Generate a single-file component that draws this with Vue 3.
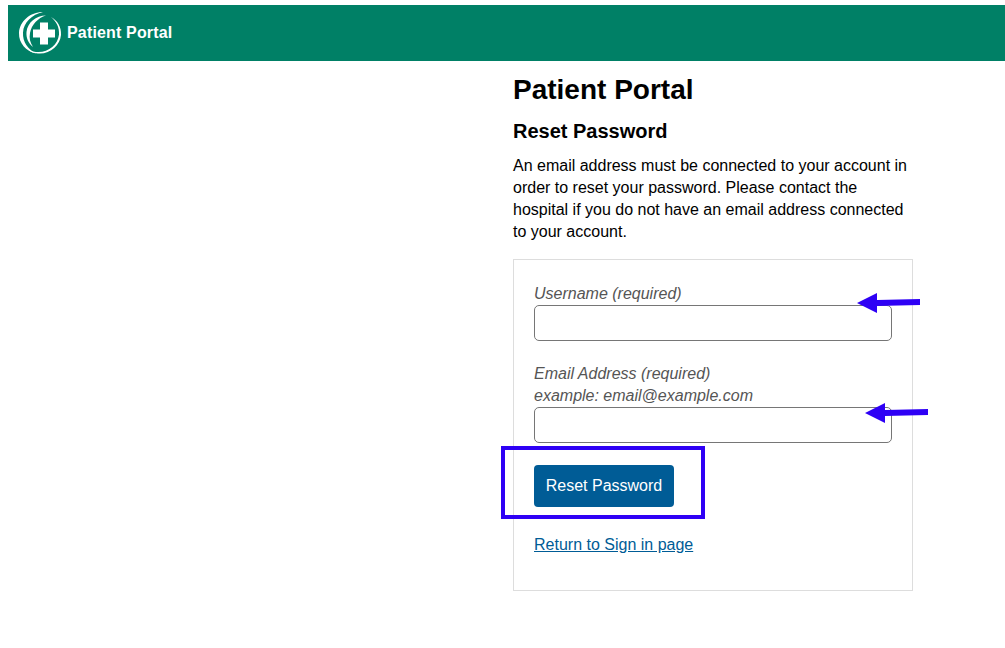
<script setup>
const paragraph = 'An email address must be connected to your account in order to reset your password. Please contact the hospital if you do not have an email address connected to your account.'
</script>

<template>
  <div class="page">
    <header class="bar">
      <svg class="logo" viewBox="0 0 44 44" width="44" height="44" aria-hidden="true">
        <path d="M25 1C12 1 1.500 10.500 1 22C0.700 32 8 40.500 18 42.500C10 38 4.500 31 5 21.500C5.500 11.500 14 3.500 25 1Z" fill="#fff" />
        <path d="M28 4.500C18 4.500 9.500 11.500 8.500 21C8 27 10.500 32.500 15 36C12 31.500 11 27 12 22C13.500 13.500 20 7 28 4.500Z" fill="#fff" />
        <path d="M33 6C39.500 9.500 43.500 16 43 24C42 34.500 32 43.500 20 42.500C15 42 12 40.500 10 38.500C13.500 40.500 17 41 20.500 41C31 41 40 33.500 41 23.500C41.500 16.500 38.500 10.500 33 6Z" fill="#fff" />
        <path d="M22 11.500H30V18.500H37V26.500H30V33.500H22V26.500H15V18.500H22Z" fill="#fff" />
      </svg>
      <span class="brand">Patient Portal</span>
    </header>

    <main class="main">
      <h1>Patient Portal</h1>
      <h2>Reset Password</h2>
      <p class="intro">{{ paragraph }}</p>

      <form class="card" @submit.prevent>
        <label class="field first">
          <span class="label">Username (required)</span>
          <span class="input-wrap">
            <input type="text" />
            <svg class="arrow a1" viewBox="0 0 64 22" width="64" height="22" aria-hidden="true">
              <path d="M0 11L20 1V8L63 7V13L20 14V21Z" fill="#2e00f5" />
            </svg>
          </span>
        </label>

        <label class="field second">
          <span class="label">Email Address (required)</span>
          <span class="label">example: email@example.com</span>
          <span class="input-wrap">
            <input type="email" />
            <svg class="arrow a2" viewBox="0 0 64 22" width="64" height="22" aria-hidden="true">
              <path d="M0 11L20 1V8L63 7V13L20 14V21Z" fill="#2e00f5" />
            </svg>
          </span>
        </label>

        <div class="btn-wrap">
          <button type="submit">Reset Password</button>
          <span class="highlight"></span>
        </div>

        <a class="back" href="#">Return to Sign in page</a>
      </form>
    </main>
  </div>
</template>

<style scoped>
.page {
  width: 1005px;
  height: 648px;
  padding-top: 5px;
  box-sizing: border-box;
  background: #fff;
  font-family: "Liberation Sans", Arial, sans-serif;
  color: #000;
  overflow: hidden;
}
.bar {
  height: 56px;
  margin-left: 8px;
  background: #008066;
  display: flex;
  align-items: center;
  padding-left: 10px;
  gap: 5px;
}
.logo { flex: none; }
.brand {
  color: #fff;
  font-size: 16px;
  font-weight: 700;
  letter-spacing: 0.16px;
}
.main {
  margin-left: 513px;
  width: 400px;
}
h1 {
  margin: 12px 0 0;
  font-size: 28px;
  line-height: 34px;
  font-weight: 700;
}
h2 {
  margin: 11px 0 0;
  font-size: 20px;
  line-height: 26px;
  font-weight: 700;
}
.intro {
  margin: 11px 0 0;
  font-size: 16px;
  line-height: 22px;
}
.card {
  margin-top: 16px;
  height: 332px;
  box-sizing: border-box;
  border: 1px solid #ddd;
  padding: 23px 20px 0;
  display: flex;
  flex-direction: column;
  align-items: flex-start;
}
.field {
  display: flex;
  flex-direction: column;
  width: 358px;
}
.second { margin-top: 22px; }
.label {
  font-size: 16px;
  line-height: 22px;
  font-style: italic;
  color: #555;
}
.input-wrap {
  position: relative;
  display: block;
  height: 36px;
}
input {
  display: block;
  width: 100%;
  height: 36px;
  box-sizing: border-box;
  border: 1px solid #767676;
  border-radius: 5px;
  background: #fff;
  padding: 0 8px;
  font: inherit;
}
.arrow {
  position: absolute;
}
.a1 { left: 323px; top: -13px; }
.a2 { left: 331px; top: -5px; }
.btn-wrap {
  position: relative;
  margin-top: 22px;
}
button {
  display: block;
  width: 140px;
  height: 42px;
  border: 0;
  border-radius: 4px;
  background: #005c96;
  color: #fff;
  font-family: inherit;
  font-size: 16px;
  padding: 0;
}
.highlight {
  position: absolute;
  left: -33px;
  top: -19px;
  width: 204px;
  height: 73px;
  box-sizing: border-box;
  border: 4px solid #2e00f5;
  pointer-events: none;
}
.back {
  margin-top: 27px;
  font-size: 16px;
  line-height: 22px;
  color: #005c96;
  text-decoration: underline;
}
</style>
